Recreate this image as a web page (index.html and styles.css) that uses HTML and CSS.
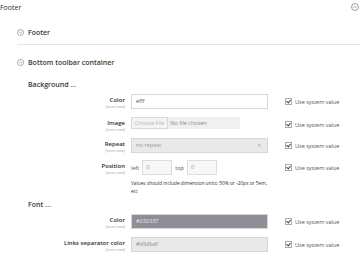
FILE: index.html
```html
<!DOCTYPE html>
<html lang="en">
<head>
    <meta charset="UTF-8">
    <title>Footer</title>
    <link rel="stylesheet" href="styles.css">
</head>
<body>
    <div class="page-head">
        <span>Footer</span>
        <svg class="toggle" viewBox="0 0 10 10"><circle cx="5" cy="5" r="4.3"/><path d="M3 6l2-2 2 2"/></svg>
    </div>

    <div class="group">
        <div class="group-head closed">
            <svg class="toggle" viewBox="0 0 10 10"><circle cx="5" cy="5" r="4.3"/><path d="M3 4l2 2 2-2"/></svg>
            <span>Footer</span>
        </div>
        <div class="group-head open">
            <svg class="toggle" viewBox="0 0 10 10"><circle cx="5" cy="5" r="4.3"/><path d="M3 6l2-2 2 2"/></svg>
            <span>Bottom toolbar container</span>
        </div>

        <div class="sub-head">Background <span class="dots">...</span></div>

        <div class="row">
            <div class="label">Color<small>[store view]</small></div>
            <div class="field"><div class="input">efff</div></div>
            <label class="inherit"><span class="check"></span>Use system value</label>
        </div>
        <div class="row file-row">
            <div class="label">Image<small>[store view]</small></div>
            <div class="field"><div class="file"><span class="file-btn">Choose File</span>No file chosen</div></div>
            <label class="inherit"><span class="check"></span>Use system value</label>
        </div>
        <div class="row">
            <div class="label">Repeat<small>[store view]</small></div>
            <div class="field"><div class="input select">no-repeat<span class="arrow">&#9662;</span></div></div>
            <label class="inherit"><span class="check"></span>Use system value</label>
        </div>
        <div class="row pos-row">
            <div class="label">Position<small>[store view]</small></div>
            <div class="field">
                <div class="pos">left <span class="small-input">0</span> top <span class="small-input">0</span></div>
                <p class="note">Values should include dimension units: 50% or -20px or 5em, etc</p>
            </div>
            <label class="inherit"><span class="check"></span>Use system value</label>
        </div>

        <div class="sub-head font-head">Font <span class="dots">...</span></div>

        <div class="row">
            <div class="label">Color<small>[store view]</small></div>
            <div class="field"><div class="input dark">#232337</div></div>
            <label class="inherit"><span class="check"></span>Use system value</label>
        </div>
        <div class="row last-row">
            <div class="label">Links separator color<small>[store view]</small></div>
            <div class="field"><div class="input light">#d9dbdf</div></div>
            <label class="inherit"><span class="check"></span>Use system value</label>
        </div>
    </div>
</body>
</html>
```

FILE: styles.css
```css
body {
    margin: 0;
    font-family: "Open Sans", Arial, sans-serif;
    font-size: 7px;
    color: #303030;
    background: #fff;
}
.toggle {
    width: 7px;
    height: 7px;
    fill: none;
    stroke: #777;
    stroke-width: 0.9;
}
.page-head {
    height: 14px;
    display: flex;
    justify-content: space-between;
    align-items: center;
    padding: 0 1px 0 0;
}
.page-head .toggle {
    width: 8px;
    height: 8px;
}
.group {
    margin-left: 17px;
}
.group-head {
    display: flex;
    align-items: center;
    gap: 4px;
    font-weight: 600;
    font-size: 7px;
    color: #41362f;
}
.group-head.closed {
    margin-top: 6px;
    height: 24px;
    border-bottom: 1px solid #e3e3e3;
}
.group-head.open {
    height: 35px;
}
.sub-head {
    margin-left: 11px;
    height: 10px;
    line-height: 10px;
    font-weight: 600;
    font-size: 7px;
    color: #41362f;
}
.dots {
    color: #1979c3;
}
.font-head {
    margin-top: 5px;
}
.row {
    display: grid;
    grid-template-columns: 108px 137px 1fr;
    column-gap: 6px;
    margin-top: 6px;
}
.sub-head + .row {
    margin-top: 4px;
}
.file-row {
    margin-top: 8px;
}
.pos-row {
    margin-top: 7px;
}
.last-row {
    margin-top: 8px;
}
.label {
    text-align: right;
    font-weight: 600;
    font-size: 6px;
    line-height: 8px;
    padding-top: 2px;
    color: #303030;
}
.label small {
    display: block;
    font-weight: 400;
    font-size: 3.6px;
    line-height: 5px;
    color: #999;
}
.input {
    height: 13px;
    border: 1px solid #d6d6d6;
    padding-left: 4px;
    line-height: 13px;
    font-size: 5.5px;
    color: #555;
}
.select {
    background: #e9e9e9;
    color: #9a9a9a;
    position: relative;
}
.arrow {
    position: absolute;
    right: 6px;
    top: 0;
    font-size: 5px;
    color: #aaa;
}
.dark {
    background: #8f8e97;
    color: #e6e6ea;
}
.light {
    background: #e9e9eb;
    color: #8e8e92;
}
.file {
    width: 109px;
    height: 12px;
    display: flex;
    align-items: center;
    gap: 2px;
    background: #f0f0f0;
    font-size: 5.5px;
    color: #8a8a8a;
}
.file-btn {
    height: 10px;
    line-height: 10px;
    padding: 0 3px;
    border: 1px solid #d8d8d8;
    background: #f3f3f3;
    color: #b5b5b5;
}
.pos {
    display: flex;
    align-items: center;
    gap: 3px;
    font-size: 5.5px;
    color: #555;
}
.small-input {
    width: 25px;
    height: 13px;
    line-height: 13px;
    border: 1px solid #ddd;
    background: #f7f7f7;
    padding-left: 3px;
    color: #999;
}
.note {
    margin: 4px 0 0;
    font-size: 4.8px;
    line-height: 8px;
    color: #303030;
}
.inherit {
    display: flex;
    align-items: center;
    gap: 3px;
    height: 15px;
    margin-left: 11px;
    font-size: 5.5px;
    color: #555;
}
.check {
    width: 5px;
    height: 5px;
    border: 1px solid #aaa;
    position: relative;
}
.check::after {
    content: "";
    position: absolute;
    left: 1px;
    top: 0;
    width: 2px;
    height: 3px;
    border: solid #444;
    border-width: 0 1px 1px 0;
    transform: rotate(40deg);
}
```
